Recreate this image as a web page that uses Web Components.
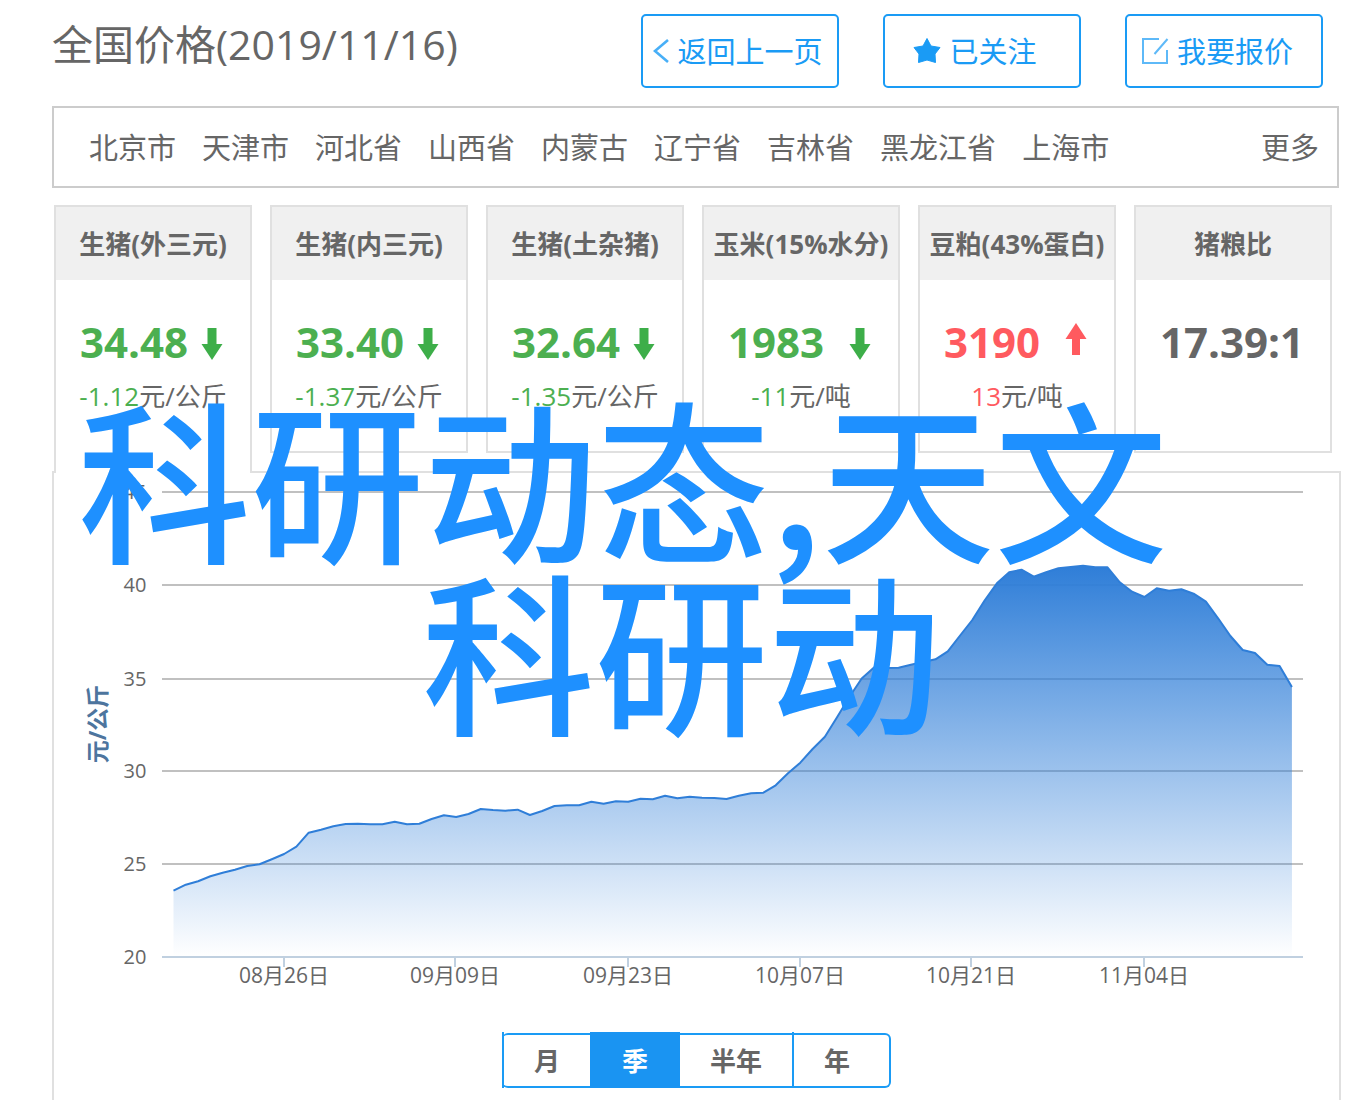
<!DOCTYPE html>
<html lang="zh-CN">
<head>
<meta charset="utf-8">
<title>全国价格</title>
<style>
  body {
    margin: 0;
    background: #fff;
    color: #666;
    font-family: "Open Sans", "Noto Sans CJK SC", sans-serif;
  }
</style>
</head>
<body>
<price-page>
  <page-header slot="header">
    全国价格(2019/11/16)
    <action-button slot="actions" icon="back">返回上一页</action-button>
    <action-button slot="actions" icon="star">已关注</action-button>
    <action-button slot="actions" icon="edit">我要报价</action-button>
  </page-header>
  <region-nav slot="regions" names="北京市 天津市 河北省 山西省 内蒙古 辽宁省 吉林省 黑龙江省 上海市" more="更多"></region-nav>
  <price-card slot="cards" active trend="down" value="34.48" change="-1.12" unit="元/公斤">生猪(外三元)</price-card>
  <price-card slot="cards" trend="down" value="33.40" change="-1.37" unit="元/公斤">生猪(内三元)</price-card>
  <price-card slot="cards" trend="down" value="32.64" change="-1.35" unit="元/公斤">生猪(土杂猪)</price-card>
  <price-card slot="cards" trend="down" value="1983" change="-11" unit="元/吨">玉米(15%水分)</price-card>
  <price-card slot="cards" trend="up" value="3190" change="13" unit="元/吨">豆粕(43%蛋白)</price-card>
  <price-card slot="cards" value="17.39:1">猪粮比</price-card>
  <trend-chart slot="chart"></trend-chart>
  <range-picker slot="chart" options="月 季 半年 年" selected="季"></range-picker>
  <page-caption slot="caption" first="科研动态,天文" second="科研动"></page-caption>
</price-page>

<script>
class Base extends HTMLElement {
  connectedCallback() {
    if (this.shadowRoot) return;
    this.attachShadow({ mode: "open" }).innerHTML = this.render();
  }
  attr(name) { return this.getAttribute(name) || ""; }
}

customElements.define("price-page", class extends Base {
  render() {
    return `<style>
      :host { display: flex; flex-direction: column; min-height: 100vh; box-sizing: border-box;
              position: relative; padding: 14px 19px 0 52px; overflow: hidden; }
      .cards { display: grid; grid-template-columns: repeat(6, minmax(0, 1fr)); gap: 18px;
               align-items: start; height: 266px; margin: 17px 9px 0 2px; }
      .panel { flex: 1; border: 2px solid #e0e0e0; border-bottom: 0; padding-bottom: 12px; }
    </style>
    <slot name="header"></slot>
    <slot name="regions"></slot>
    <section class="cards"><slot name="cards"></slot></section>
    <main class="panel"><slot name="chart"></slot></main>
    <slot name="caption"></slot>`;
  }
});

customElements.define("page-header", class extends Base {
  render() {
    return `<style>
      :host { display: flex; justify-content: space-between; align-items: flex-start; padding-right: 18px; }
      h1 { margin: 0; font-size: 41px; font-weight: 400; line-height: 60px; white-space: nowrap; }
      .actions { display: flex; gap: 44px; }
    </style>
    <h1><slot></slot></h1>
    <div class="actions"><slot name="actions"></slot></div>`;
  }
});

const ICONS = {
  back: `<svg width="16" height="28" viewBox="0 0 16 28"><path d="M15 3L2 14L15 25" fill="none" stroke="#1a9bf5" stroke-width="2.600" opacity=".8"/></svg>`,
  star: `<svg width="28" height="28" viewBox="0 0 28 28"><path d="M14 1.500L18 9L27 10.500L22 17L22.500 25.500L14 23L5.500 25.500L6 17L1 10.500L10 9Z" fill="#1a9bf5" stroke="#1a9bf5" stroke-linejoin="round"/></svg>`,
  edit: `<svg width="28" height="28" viewBox="0 0 28 28"><path d="M18 2H2V26H26V13M13.500 17L26.500 2" fill="none" stroke="#1a9bf5" stroke-width="2" opacity=".7"/></svg>`
};

customElements.define("action-button", class extends Base {
  render() {
    return `<style>
      :host { display: block; }
      button { display: flex; align-items: center; justify-content: center; gap: 8px; width: 198px; height: 74px;
               box-sizing: border-box; padding: 0 4px 0 0; border: 2px solid #1a9bf5; border-radius: 5px;
               background: #fff; color: #1a9bf5; font: inherit; font-size: 29px; line-height: 40px; white-space: nowrap; }
      button.wide { padding-right: 14px; }
      span { padding-top: 2px; }
      svg { flex: none; }
    </style>
    <button type="button" class="${this.attr("icon") === "back" ? "" : "wide"}">${ICONS[this.attr("icon")]}<span><slot></slot></span></button>`;
  }
});

customElements.define("region-nav", class extends Base {
  render() {
    const links = this.attr("names").split(" ").map(n => `<a href="#">${n}</a>`).join("");
    return `<style>
      :host { display: block; margin: 18px 2px 0 0; border: 2px solid #ccc; }
      nav { display: flex; gap: 26px; padding: 2px 18px 0 35px; font-size: 29px; line-height: 76px; }
      a { color: #666; text-decoration: none; white-space: nowrap; }
      .more { margin-left: auto; }
    </style>
    <nav>${links}<a class="more" href="#">${this.attr("more")}</a></nav>`;
  }
});

customElements.define("price-card", class extends Base {
  render() {
    const trend = this.attr("trend");
    const arrow = trend === "down"
      ? `<svg width="22" height="34" viewBox="0 0 22 34"><path d="M6.500 1H15.500V17H21.500L11 33L.500 17H6.500Z" fill="#3dae49"/></svg>`
      : trend === "up"
      ? `<svg class="rise" width="22" height="34" viewBox="0 0 22 34"><path d="M7 33H15V17H21.500L11 1L.500 17H7Z" fill="#ff5a5f"/></svg>` : "";
    const change = this.attr("unit") ? `<p><span class="tone">${this.attr("change")}</span>${this.attr("unit")}</p>` : "";
    return `<style>
      :host { display: block; box-sizing: border-box; height: 248px; border: 2px solid #e0e0e0; background: #fff; }
      :host([active]) { height: 268px; border-bottom: 0; position: relative; }
      h2 { margin: 0; padding-top: 2px; background: #f0f0f0; font-size: 26px; line-height: 71px; text-align: center; white-space: nowrap; }
      .value { display: flex; justify-content: space-between; align-items: center; margin-top: 32px;
               padding: 0 27px 0 24px; font-size: 42px; font-weight: 700; line-height: 60px; }
      svg { margin-top: 4px; }
      svg.rise { margin-top: -6px; }
      :host([trend="down"]) .tone { color: #4caf50; }
      :host([trend="up"]) .tone { color: #ff5a5f; }
      p { margin: 4px 0 0; font-size: 26px; line-height: 40px; text-align: center; white-space: nowrap; }
    </style>
    <h2><slot></slot></h2>
    <div class="value"><span class="tone">${this.attr("value")}</span>${arrow}</div>
    ${change}`;
  }
});

const SERIES = [
  890.7, 884.7, 881.3, 876.3, 872.7, 869.7, 866, 864.3, 859.3, 854, 846.7, 832.7, 829.7, 826.3, 824, 823.7,
  824.3, 824.3, 821.7, 824.3, 823.7, 819, 815.3, 817, 814, 809, 810, 810.7, 809.7, 815, 811, 806, 805.3, 805.3,
  801.7, 803.7, 801.3, 801.7, 798.7, 799.3, 795.7, 798.3, 796.7, 797.7, 798, 799, 795.7, 793.3, 792.7, 785.3,
  773.3, 762.7, 749, 736.7, 717, 697, 678.5, 667.5, 668, 667.7, 664.7, 662, 659.3, 651.3, 635.5, 620, 600.5,
  583.3, 572.3, 569.7, 576.7, 572.3, 568.3, 567, 565.7, 567.3, 567.3, 582.3, 591.7, 597, 588.3, 590.7, 589.3,
  593.7, 601.7, 618.3, 636, 650, 653, 664.7, 666, 687
];

customElements.define("trend-chart", class extends Base {
  render() {
    const points = SERIES.map((y, i) => `${(173.5 + i * 12.29).toFixed(1)},${y}`).join(" ");
    const rows = [[45, 492], [40, 585], [35, 679], [30, 771], [25, 864], [20, 957]];
    const dates = [["08月26日", 284], ["09月09日", 455], ["09月23日", 628], ["10月07日", 800], ["10月21日", 971], ["11月04日", 1144]];
    return `<style>
      :host { display: block; }
      svg { display: block; width: 100%; height: auto; }
      text { font-size: 20px; fill: #666; text-anchor: middle; }
      .date { font-size: 21px; }
      .unit { font-size: 23px; font-weight: 700; fill: #4d759e; }
      .grid { stroke: #c0c0c0; stroke-width: 2; }
      .axis { stroke: #c0d0e0; stroke-width: 2; }
    </style>
    <svg viewBox="54 473 1285 560" role="img" aria-label="元/公斤">
      <defs><linearGradient id="fill" gradientUnits="userSpaceOnUse" x1="0" y1="566" x2="0" y2="957">
        <stop offset="0" stop-color="#2f7ed8"/><stop offset="1" stop-color="#2f7ed8" stop-opacity="0"/>
      </linearGradient></defs>
      ${rows.slice(0, 5).map(r => `<line class="grid" x1="162" x2="1303" y1="${r[1]}" y2="${r[1]}"/>`).join("")}
      <polygon points="173.5,957 ${points} 1292,957" fill="url(#fill)"/>
      <polyline points="${points}" fill="none" stroke="#2f7ed8" stroke-width="2" stroke-linejoin="round"/>
      <line class="axis" x1="162" x2="1303" y1="957" y2="957"/>
      ${dates.map(d => `<line class="axis" x1="${d[1]}" x2="${d[1]}" y1="957" y2="967"/><text class="date" x="${d[1]}" y="983">${d[0]}</text>`).join("")}
      ${rows.map(r => `<text x="135" y="${r[1] + 7}">${r[0]}</text>`).join("")}
      <text class="unit" transform="translate(106 724) rotate(-90)">元/公斤</text>
    </svg>`;
  }
});

customElements.define("range-picker", class extends Base {
  render() {
    const buttons = this.attr("options").split(" ").map(o =>
      `<button type="button" aria-pressed="${o === this.attr("selected")}">${o}</button>`).join("");
    return `<style>
      :host { display: flex; justify-content: center; }
      .group { display: flex; box-sizing: border-box; height: 55px; padding-right: 9px;
               border: 2px solid #1a9bf5; border-left: 0; border-radius: 6px; }
      button { box-sizing: border-box; height: 56px; margin: -3px 0 -2px; padding: 2px 30px 0; border: 0 solid #1a9bf5;
               background: none; color: #666; font: inherit; font-size: 26px; font-weight: 700; line-height: 54px; }
      button:first-child { border-left-width: 2px; }
      button:nth-child(3) { border-right-width: 2px; }
      button[aria-pressed="true"] { padding: 2px 32px 0; background: #1a94f2; color: #fff; }
    </style>
    <div class="group" role="group">${buttons}</div>`;
  }
});

customElements.define("page-caption", class extends Base {
  render() {
    return `<style>
      :host { display: block; position: absolute; left: 78px; top: 389px; pointer-events: none;
              color: #1e90ff; font-family: "Noto Sans CJK SC", sans-serif; font-size: 173px; font-weight: 500;
              line-height: 172px; white-space: nowrap; }
      div + div { padding-left: 344px; }
    </style>
    <div>${this.attr("first")}</div><div>${this.attr("second")}</div>`;
  }
});
</script>
</body>
</html>
